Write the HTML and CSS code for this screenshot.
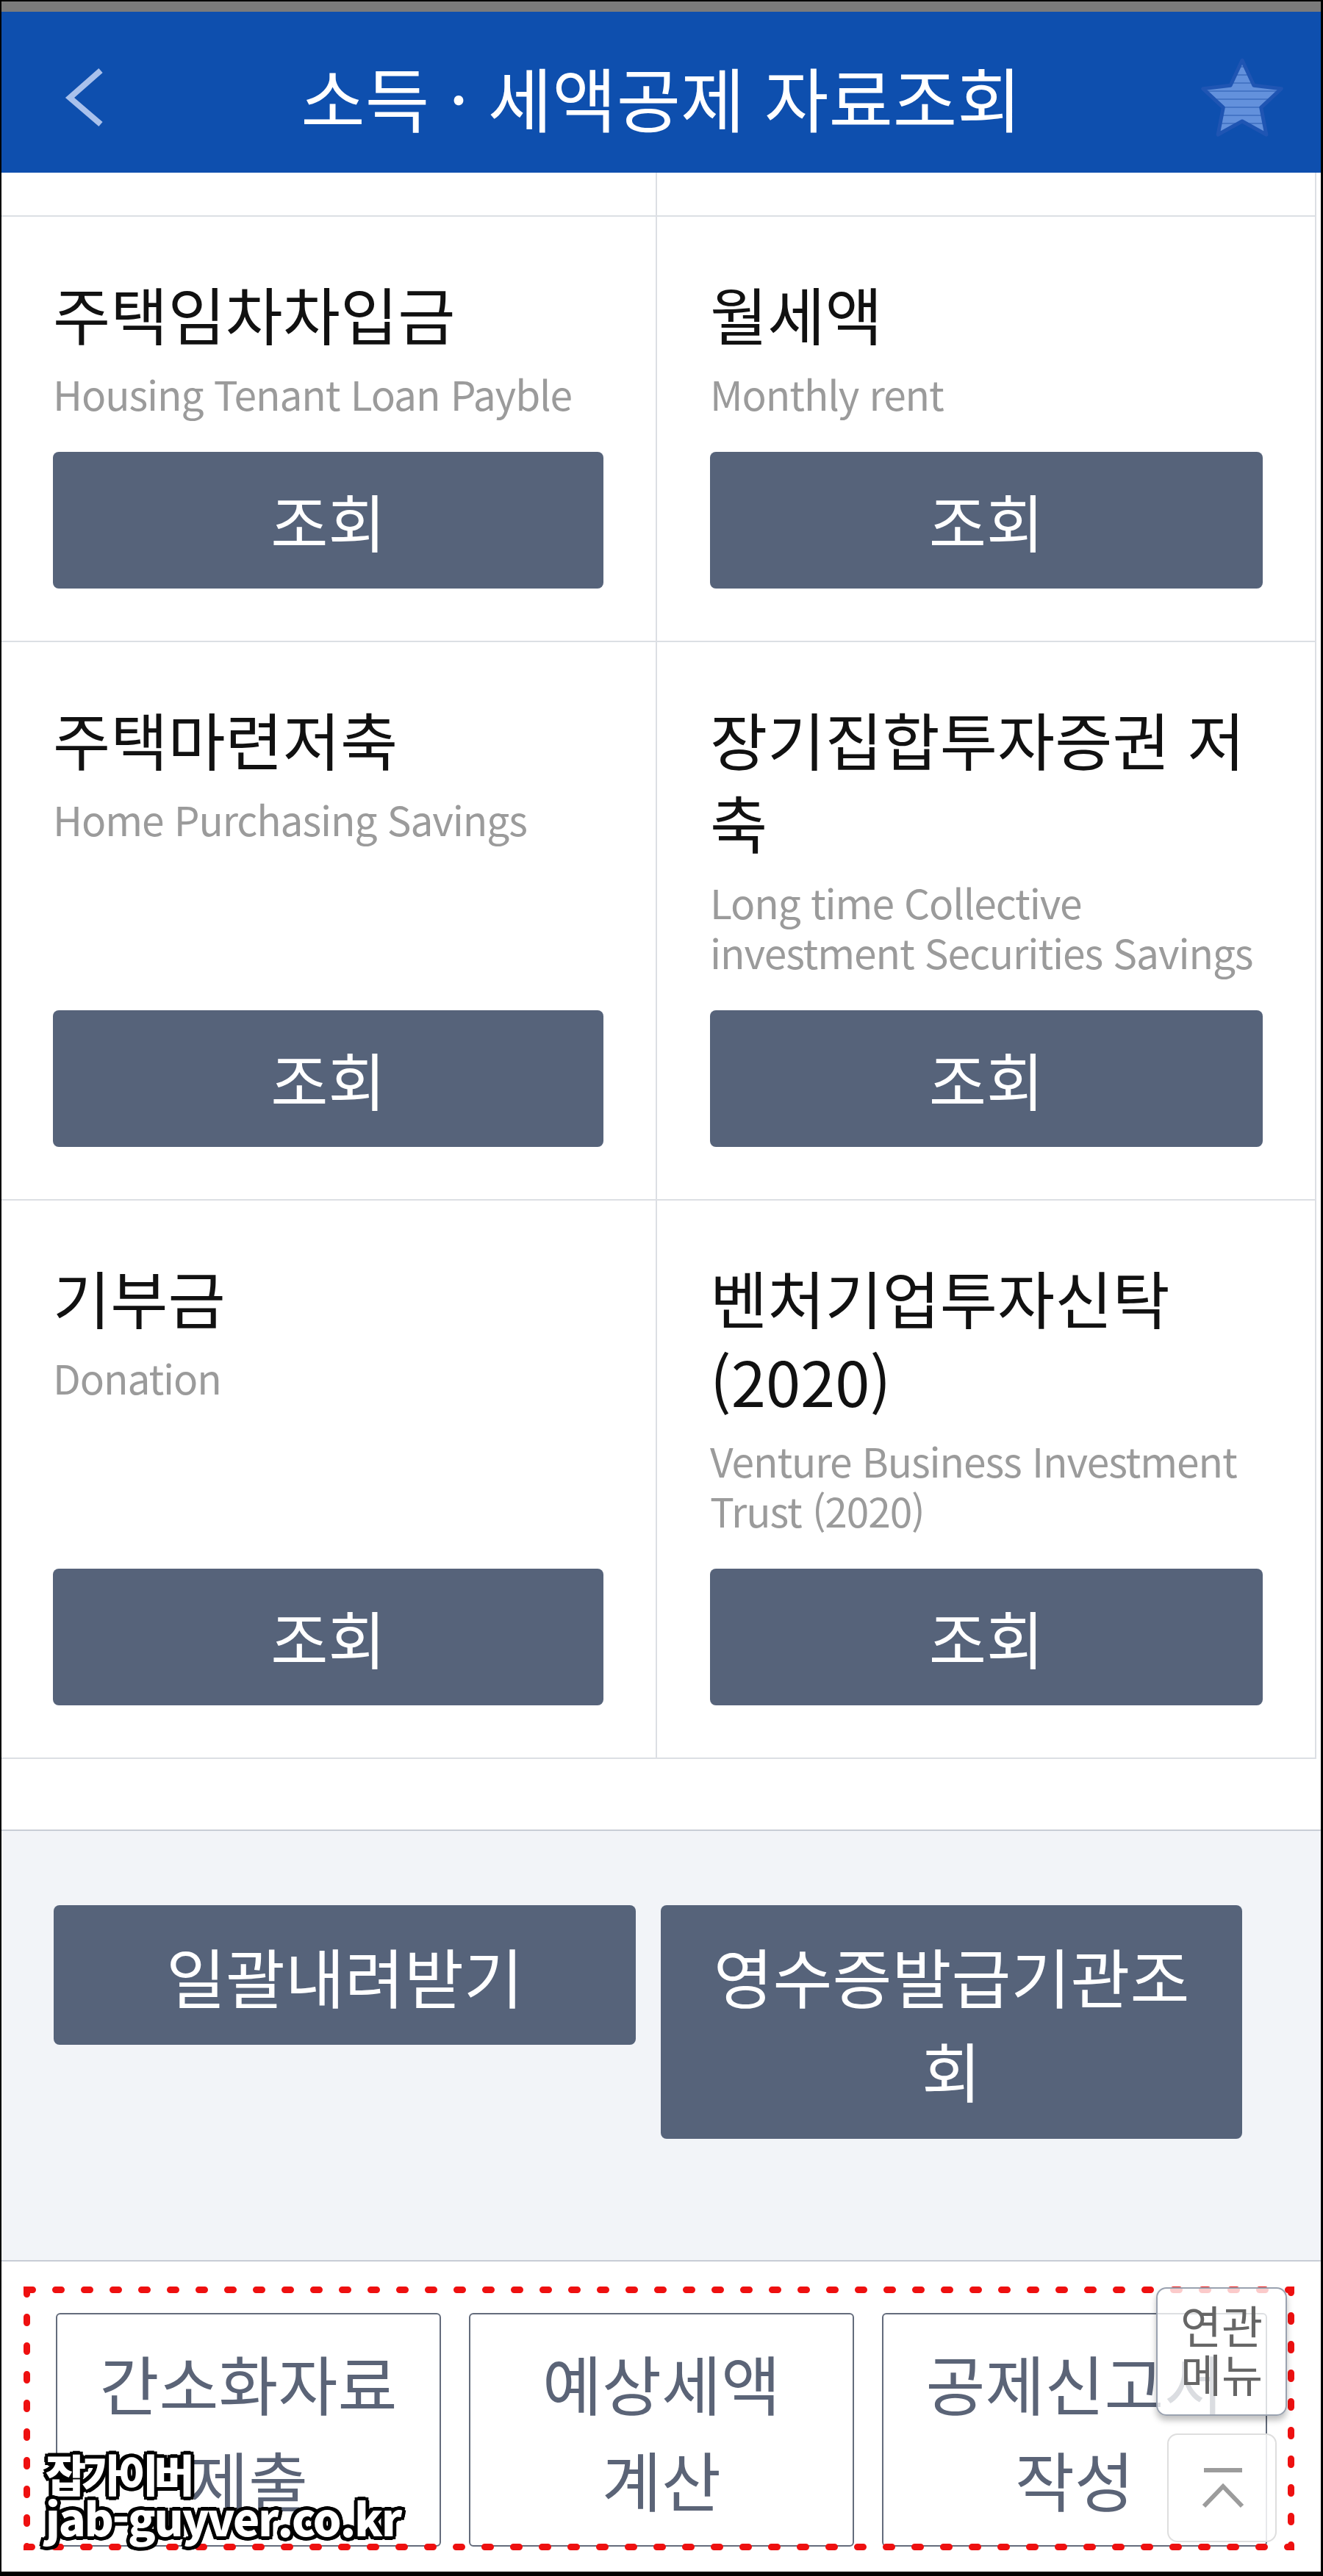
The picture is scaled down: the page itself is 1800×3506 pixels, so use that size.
FILE: index.html
```html
<!DOCTYPE html>
<html lang="ko">
<head>
    <meta charset="UTF-8">
    <meta name="viewport" content="width=device-width, initial-scale=1.0">
    <title>소득 · 세액공제 자료조회</title>
    <link rel="stylesheet" href="styles.css">
</head>
<body>
    <div class="screen">
        <div class="statusbar"></div>

        <header class="appbar">
            <button class="appbar-back" type="button" aria-label="뒤로">
                <svg width="70" height="100" viewBox="0 0 70 100">
                    <polyline points="57,20 15,57 57,93" fill="none" stroke="#a9c1ec" stroke-width="8"/>
                </svg>
            </button>
            <h1 class="appbar-title">소득 · 세액공제 자료조회</h1>
            <span class="appbar-star">
                <svg width="116" height="122" viewBox="0 0 116 122">
                    <defs>
                        <pattern id="stripes" width="10" height="11" patternUnits="userSpaceOnUse">
                            <rect width="10" height="11" fill="#6391dc"/>
                            <rect y="9" width="10" height="2" fill="#4676c6"/>
                        </pattern>
                    </defs>
                    <polygon points="58,12 73.9,46.2 111.3,50.7 83.7,76.3 90.9,113.3 58,95 25.1,113.3 32.3,76.3 4.7,50.7 42.1,46.2"
                             fill="url(#stripes)" stroke="#1f55b3" stroke-width="5" stroke-linejoin="round"/>
                </svg>
            </span>
        </header>

        <div class="list">
            <div class="cell cell--stub"></div>
            <div class="cell cell--stub"></div>

            <div class="cell">
                <h2 class="cell-title">주택임차차입금</h2>
                <p class="cell-sub">Housing Tenant Loan Payble</p>
                <button class="btn btn--query" type="button">조회</button>
            </div>
            <div class="cell">
                <h2 class="cell-title">월세액</h2>
                <p class="cell-sub">Monthly rent</p>
                <button class="btn btn--query" type="button">조회</button>
            </div>

            <div class="cell">
                <h2 class="cell-title">주택마련저축</h2>
                <p class="cell-sub">Home Purchasing Savings</p>
                <button class="btn btn--query" type="button">조회</button>
            </div>
            <div class="cell">
                <h2 class="cell-title">장기집합투자증권 저축</h2>
                <p class="cell-sub">Long time Collective investment Securities Savings</p>
                <button class="btn btn--query" type="button">조회</button>
            </div>

            <div class="cell">
                <h2 class="cell-title">기부금</h2>
                <p class="cell-sub">Donation</p>
                <button class="btn btn--query" type="button">조회</button>
            </div>
            <div class="cell">
                <h2 class="cell-title">벤처기업투자신탁(2020)</h2>
                <p class="cell-sub">Venture Business Investment Trust (2020)</p>
                <button class="btn btn--query" type="button">조회</button>
            </div>
        </div>

        <section class="actions">
            <button class="btn btn--action btn--wide" type="button">일괄내려받기</button>
            <button class="btn btn--action" type="button">영수증발급기관조회</button>
        </section>

        <section class="links">
            <button class="btn-outline" type="button">간소화자료 제출</button>
            <button class="btn-outline" type="button">예상세액 계산</button>
            <button class="btn-outline" type="button">공제신고서 작성</button>
        </section>

        <!-- annotation drawn over the screenshot -->
        <svg class="mark" width="1730" height="360" viewBox="0 0 1730 360">
            <rect x="4.5" y="4.5" width="1720" height="350" fill="none" stroke="#ee1010"
                  stroke-width="9" stroke-linecap="round" stroke-dasharray="8 31"/>
        </svg>

        <div class="float-menu">연관<br>메뉴</div>
        <button class="float-top" type="button" aria-label="맨 위로">
            <svg width="60" height="60" viewBox="0 0 60 60">
                <line x1="5" y1="6" x2="57" y2="6" stroke="#9c9c9c" stroke-width="6"/>
                <polyline points="5,55 31,28 57,55" fill="none" stroke="#9c9c9c" stroke-width="6"/>
            </svg>
        </button>

        <div class="watermark">잡가이버<br><span class="watermark-url">jab-guyver.co.kr</span></div>
    </div>
</body>
</html>
```

FILE: styles.css
```css
body {
    margin: 0;
    background: #000;
    font-family: "Noto Sans CJK KR", "Noto Sans", sans-serif;
}
.screen {
    position: relative;
    margin: 2px 3px 0 2px;
    height: 3498px;
    overflow: hidden;
    background: #fff;
}
.statusbar {
    height: 14px;
    background: #7b7b7b;
}

/* app bar */
.appbar {
    height: 219px;
    background: #0e4fae;
    display: grid;
    grid-template-columns: 250px 1fr 250px;
    align-items: center;
}
.appbar-back {
    justify-self: start;
    margin-left: 78px;
    padding: 0;
    border: none;
    background: none;
    display: flex;
}
.appbar-title {
    margin: 0;
    text-align: center;
    color: #fff;
    font-size: 95px;
    font-weight: 400;
    line-height: 120px;
    padding-top: 12px;
    white-space: nowrap;
}
.appbar-star {
    justify-self: end;
    margin-right: 49px;
    display: flex;
    padding-top: 10px;
}

/* list grid */
.list {
    display: grid;
    grid-template-columns: 892px 897px;
    width: 1789px;
}
.cell {
    display: flex;
    flex-direction: column;
    padding: 74px 71px 71px 70px;
    border-right: 2px solid #dcdfe4;
    border-bottom: 2px solid #dcdfe4;
}
.cell:nth-child(even) {
    padding-left: 72px;
}
.cell--stub {
    height: 58px;
    padding: 0;
}
.cell-title {
    margin: 0;
    font-size: 85px;
    font-weight: 400;
    line-height: 113px;
    color: #111;
}
.cell-sub {
    margin: 19px 0 46px;
    font-size: 55px;
    letter-spacing: -1.1px;
    line-height: 68px;
    color: #9b9b9b;
}

/* buttons */
.btn {
    border: none;
    border-radius: 8px;
    background: #56637a;
    color: #fff;
    font-family: inherit;
    font-size: 88px;
    text-align: center;
    cursor: pointer;
}
.btn--query {
    margin-top: auto;
    width: 100%;
    padding: 30px 0;
    line-height: 126px;
    font-size: 85px;
}
.btn--action {
    width: 791px;
    padding: 31px 50px;
    line-height: 128px;
}
.btn--wide {
    width: 792px;
}

.actions {
    margin-top: 96px;
    border-top: 2px solid #c9ced6;
    background: #f2f4f8;
    display: flex;
    align-items: flex-start;
    gap: 34px;
    padding: 101px 0 165px 71px;
}

.links {
    border-top: 2px solid #c8cdd6;
    display: flex;
    gap: 38px;
    padding: 70px 0 0 74px;
}
.btn-outline {
    width: 524px;
    padding: 26px 20px;
    border: 2px solid #646c7c;
    border-radius: 6px;
    background: #fff;
    color: #5b6477;
    font-family: inherit;
    font-size: 88px;
    line-height: 131px;
    text-align: center;
    word-break: keep-all;
}

/* overlays */
.mark {
    position: absolute;
    left: 30px;
    top: 3110px;
}
.float-menu {
    position: absolute;
    left: 1571px;
    top: 3111px;
    width: 178px;
    height: 175px;
    box-sizing: border-box;
    padding-top: 16px;
    border: 2px solid #9aa2b0;
    border-radius: 14px;
    background: rgba(255, 255, 255, 0.78);
    box-shadow: 0 6px 8px rgba(0, 0, 0, 0.25);
    color: #666;
    font-size: 61px;
    line-height: 66px;
    text-align: center;
}
.float-top {
    position: absolute;
    left: 1586px;
    top: 3310px;
    width: 149px;
    height: 148px;
    border: 2px solid #dedede;
    border-radius: 14px;
    background: rgba(255, 255, 255, 0.85);
    display: flex;
    align-items: center;
    justify-content: center;
    padding: 0;
}
.watermark {
    position: absolute;
    left: 60px;
    top: 3334px;
    color: #fff;
    font-size: 60px;
    font-weight: 900;
    line-height: 60px;
    letter-spacing: -6px;
    text-shadow: 3px 0 0 #000, -3px 0 0 #000, 0 3px 0 #000, 0 -3px 0 #000,
                 3px 3px 0 #000, -3px -3px 0 #000, 3px -3px 0 #000, -3px 3px 0 #000,
                 5px 0 0 #000, -5px 0 0 #000, 0 5px 0 #000, 0 -5px 0 #000,
                 4px 4px 0 #000, -4px -4px 0 #000, 4px -4px 0 #000, -4px 4px 0 #000;
}
.watermark-url {
    font-size: 61px;
    letter-spacing: -2px;
}
```
